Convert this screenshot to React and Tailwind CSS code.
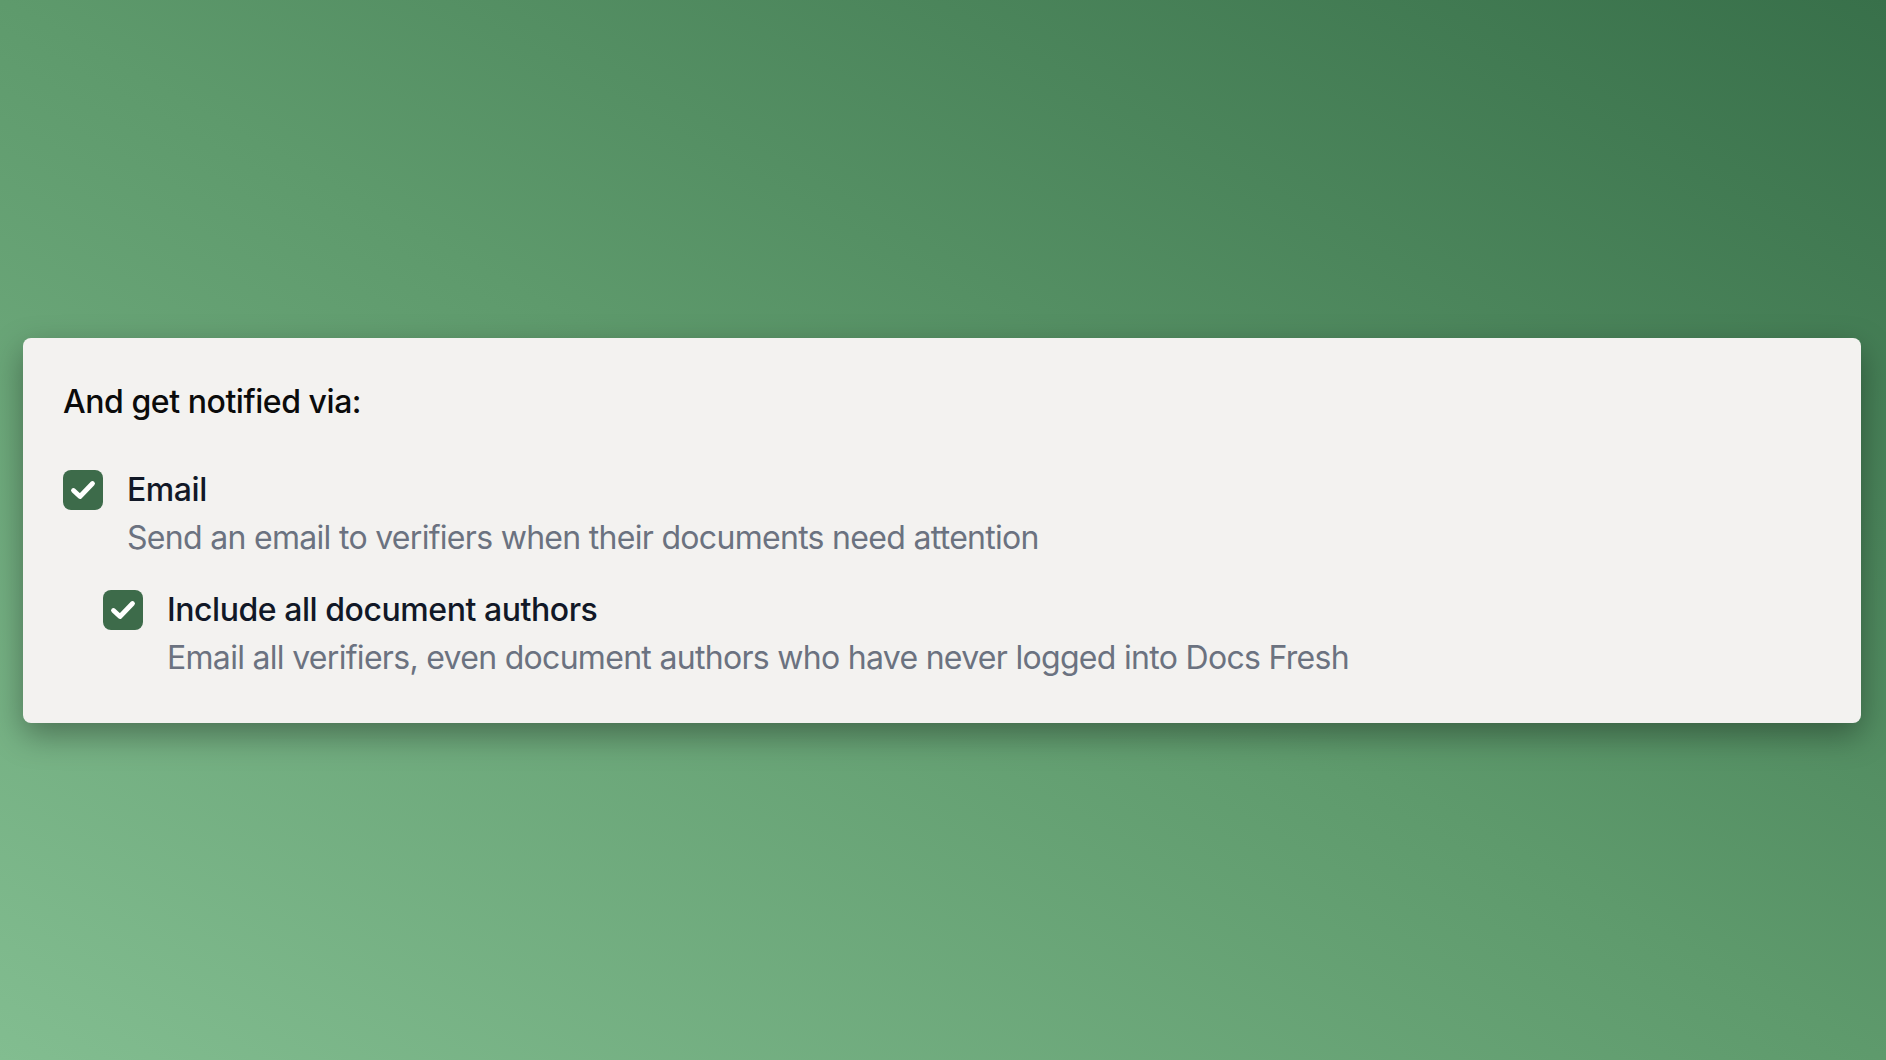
import React from "react";

function Check() {
  return (
    <span className="mt-1 flex h-10 w-10 shrink-0 items-center justify-center rounded-[8px] bg-[#3d6b4a]">
      <svg width="40" height="40" viewBox="0 0 40 40" fill="none">
        <path d="M10.5 20.5 L17 26.5 L29.5 13.5" stroke="white" strokeWidth="4.8" strokeLinecap="round" strokeLinejoin="round" />
      </svg>
    </span>
  );
}

function Option({ label, desc }) {
  return (
    <div className="flex items-start gap-6">
      <Check />
      <div className="flex flex-col">
        <span className="text-[32px] leading-[48px] font-medium tracking-[-0.45px] text-[#111827]">{label}</span>
        <span className="text-[32px] leading-[48px] tracking-[-0.7px] text-[#6b7280]">{desc}</span>
      </div>
    </div>
  );
}

export default function App() {
  return (
    <div
      className="flex h-[1060px] w-full items-center bg-gradient-to-tr from-[#82bd90] via-[#5e9a6c] to-[#38704a] pl-[23px] pr-[25px]"
      style={{ fontFamily: "Inter, 'Noto Sans', sans-serif" }}
    >
      <div className="w-full rounded-[8px] bg-[#f3f2f0] px-10 pt-10 pb-[41px] shadow-[0_12px_32px_rgba(0,0,0,0.35)]">
        <h2 className="text-[32px] leading-[48px] font-medium tracking-[-0.45px] text-[#0b0b0b]">And get notified via:</h2>
        <div className="mt-10">
          <Option label="Email" desc="Send an email to verifiers when their documents need attention" />
        </div>
        <div className="mt-6 pl-10">
          <Option label="Include all document authors" desc="Email all verifiers, even document authors who have never logged into Docs Fresh" />
        </div>
      </div>
    </div>
  );
}
